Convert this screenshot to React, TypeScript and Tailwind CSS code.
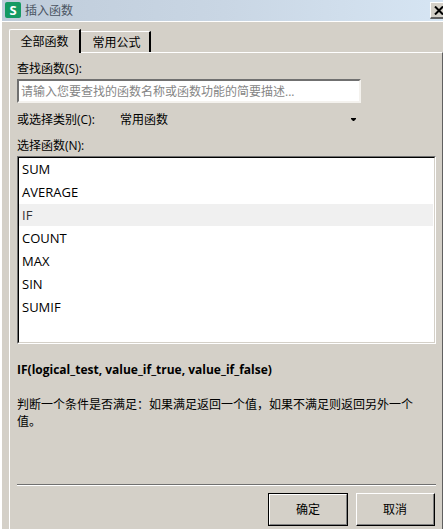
import React, { useState } from "react";

const FUNCTIONS = ["SUM", "AVERAGE", "IF", "COUNT", "MAX", "SIN", "SUMIF"];

const TitleBar: React.FC = () => (
  <header className="flex h-[22px] items-center overflow-hidden border-b border-white bg-linear-to-r from-[#bfccda] via-[#c9d6e4] to-[#d6e5f3] pl-[3px]">
    <span className="mb-px flex size-4 items-center justify-center rounded-xs bg-[#149a63] text-[13px] leading-none font-bold text-white">
      S
    </span>
    <h1 className="ml-1 grow pt-px text-[#4b5563]">插入函数</h1>
    <button
      type="button"
      aria-label="关闭"
      className="-mr-[5px] flex h-[17px] w-[18px] shrink-0 items-center justify-center border-t border-r-2 border-b-2 border-l border-t-white border-r-[#606060] border-b-[#606060] border-l-white bg-[#d4d0c8]"
    >
      <svg viewBox="0 0 10 9" className="h-[9px] w-[10px]" stroke="black" strokeWidth="2" fill="none">
        <path d="M1 0.5 L9 8.5 M9 0.5 L1 8.5" />
      </svg>
    </button>
  </header>
);

const Tabs: React.FC = () => (
  <div role="tablist" className="flex items-end">
    <button
      type="button"
      role="tab"
      aria-selected="true"
      className="relative z-10 -mb-px h-6 w-[72px] rounded-tl-xs border-t border-r-2 border-l border-t-white border-r-black border-l-white bg-[#d4d0c8]"
    >
      全部函数
    </button>
    <button
      type="button"
      role="tab"
      aria-selected="false"
      className="h-[21px] w-[70px] border-t border-r-2 border-t-white border-r-black pt-px pl-[3px]"
    >
      常用公式
    </button>
  </div>
);

export default function App() {
  const [selected, setSelected] = useState("IF");

  return (
    <div className="flex min-h-screen flex-col overflow-hidden border-l-2 border-white bg-[#d4d0c8] font-['Open_Sans','Noto_Sans_CJK_SC',sans-serif] text-[12px] leading-4 text-black">
      <TitleBar />

      <main className="flex grow flex-col pt-[7px] pl-[7px]">
        <Tabs />

        <section className="flex grow flex-col border-t border-r border-l border-t-white border-r-[#606060] border-l-white pt-2 pr-[6px] pl-[7px]">
          <label htmlFor="search">查找函数(S):</label>
          <input
            id="search"
            type="text"
            placeholder="请输入您要查找的函数名称或函数功能的简要描述..."
            className="mt-[2px] h-6 w-[82%] rounded-none border-t-2 border-r-2 border-b-2 border-l-2 border-t-[#707070] border-r-[#f4f2ee] border-b-[#f4f2ee] border-l-[#707070] bg-white px-[2px] outline-none placeholder:text-[#858585]"
          />

          <div className="mt-[9px] flex items-center">
            <label htmlFor="category" className="w-[103px] shrink-0">
              或选择类别(C):
            </label>
            <div className="relative w-60">
              <select id="category" className="block w-full appearance-none bg-transparent outline-none">
                <option>常用函数</option>
              </select>
              <svg viewBox="0 0 5 3" className="pointer-events-none absolute top-[6px] right-1 h-[3px] w-[5px]">
                <path d="M0 0 H5 V1 L3 3 H2 L0 1 Z" />
              </svg>
            </div>
          </div>

          <h2 id="functions-label" className="mt-[10px]">
            选择函数(N):
          </h2>
          <div className="mt-[2px] border border-t-[#707070] border-r-white border-b-white border-l-[#707070]">
            <ul
              role="listbox"
              aria-labelledby="functions-label"
              className="h-[186px] overflow-hidden border border-t-black border-r-[#d4d0c8] border-b-[#d4d0c8] border-l-black bg-white pr-px text-[13px]"
            >
              {FUNCTIONS.map((name) => (
                <li
                  key={name}
                  role="option"
                  aria-selected={name === selected}
                  onClick={() => setSelected(name)}
                  className="mb-px h-[22px] cursor-default pl-[3px] leading-[22px] aria-selected:bg-[#f0f0f0] aria-selected:text-[#333333]"
                >
                  {name}
                </li>
              ))}
            </ul>
          </div>

          <p className="mt-[18px] font-bold">IF(logical_test, value_if_true, value_if_false)</p>
          <p className="mt-[18px] grow pr-4 leading-[17px]">
            判断一个条件是否满足：如果满足返回一个值，如果不满足则返回另外一个值。
          </p>

          <hr className="border-t border-b border-t-[#707070] border-b-white" />
          <div className="mt-[7px] mb-[3px] flex justify-end gap-2 pr-px">
            <button type="submit" className="h-[33px] w-20 border border-black">
              <span className="flex h-full items-center justify-center border border-t-white border-r-[#808080] border-b-[#808080] border-l-white">
                确定
              </span>
            </button>
            <button
              type="button"
              className="h-[33px] w-[79px] border border-t-white border-r-black border-b-black border-l-white"
            >
              <span className="flex h-full items-center justify-center border-r border-b border-[#808080] pt-px">取消</span>
            </button>
          </div>
        </section>
      </main>
    </div>
  );
}
